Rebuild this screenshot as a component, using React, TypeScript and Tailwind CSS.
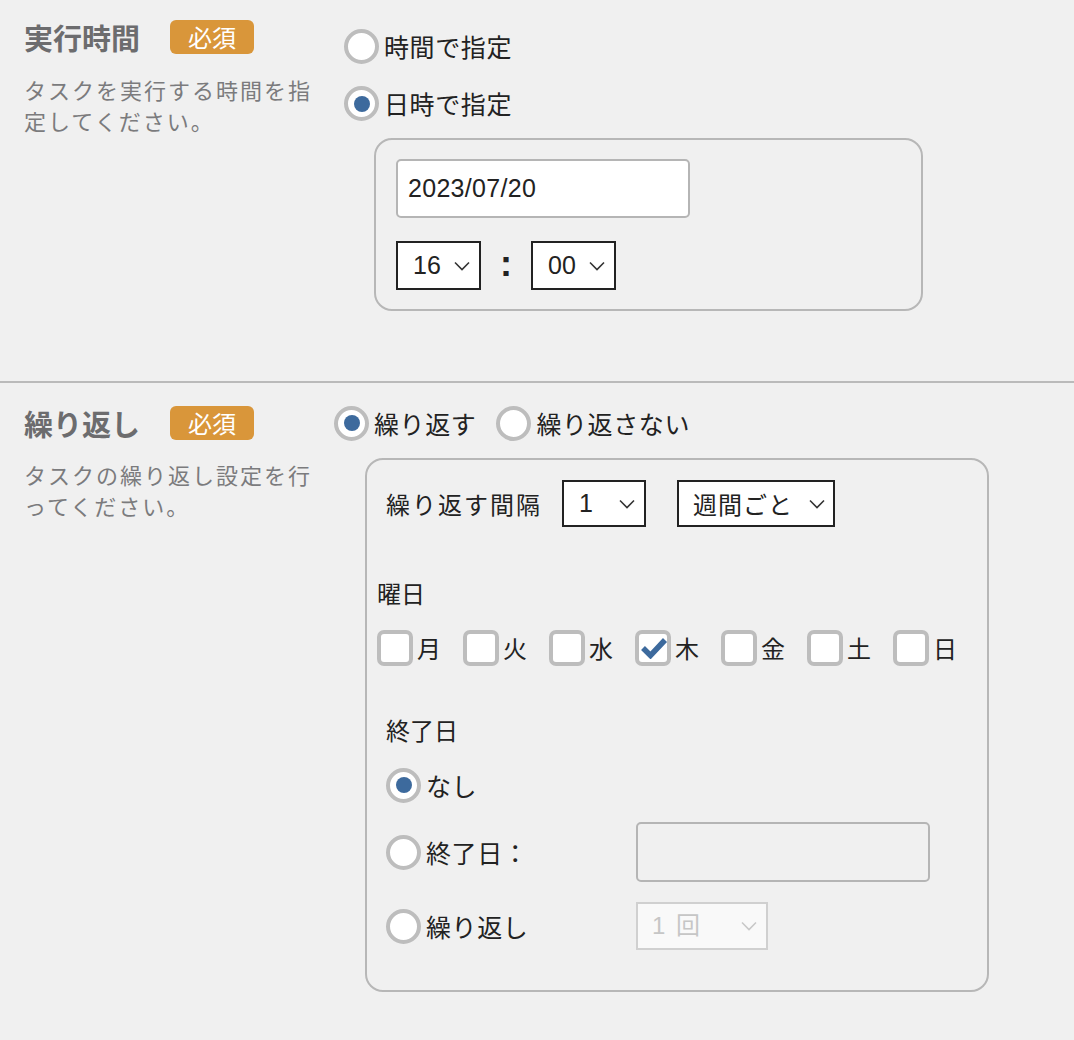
import React from "react";

const jp = '"Noto Sans CJK JP", sans-serif';
const num = '"Liberation Sans", "Noto Sans CJK JP", sans-serif';

function Chevron({ color = "#333" }: { color?: string }) {
    return (
        <svg width="16" height="10" viewBox="0 0 16 10" fill="none">
            <path d="M1 1.5 L8 8.5 L15 1.5" stroke={color} strokeWidth="1.6" />
        </svg>
    );
}

function Radio({ checked, label }: { checked?: boolean; label: string }) {
    return (
        <div className="flex items-center gap-[5px]">
            <span className="flex h-[35px] w-[35px] shrink-0 items-center justify-center rounded-full border-[4px] border-[#bdbdbd] bg-white">
                {checked && <span className="h-[16px] w-[16px] rounded-full bg-[#3d6a9d]" />}
            </span>
            <span className="text-[25px] leading-none tracking-[0.6px] text-[#222]">{label}</span>
        </div>
    );
}

function Select({ value, width, className = "" }: { value: string; width: string; className?: string }) {
    return (
        <div
            className={`flex items-center justify-between border-2 border-[#222] bg-white pl-[15px] pr-[9px] ${width} ${className}`}
            style={{ fontFamily: num }}
        >
            <span className="text-[25px] leading-none text-[#222]">{value}</span>
            <Chevron />
        </div>
    );
}

function Badge() {
    return (
        <span className="flex h-[34px] w-[84px] items-center justify-center rounded-[6px] bg-[#d9963a] text-[24px] leading-none text-white">
            必須
        </span>
    );
}

function Checkbox({ label, checked }: { label: string; checked?: boolean }) {
    return (
        <div className="flex w-[64px] items-center gap-[4px]">
            <span className="relative h-[36px] w-[36px] shrink-0 rounded-[7px] border-[4px] border-[#bdbdbd] bg-white">
                {checked && (
                    <svg className="absolute left-[1px] top-[3px]" width="28" height="22" viewBox="0 0 28 22" fill="none">
                        <path d="M3 11 L10.5 18.5 L25 3" stroke="#3d6a9d" strokeWidth="5.5" />
                    </svg>
                )}
            </span>
            <span className="text-[24px] leading-none text-[#222]">{label}</span>
        </div>
    );
}

export default function App() {
    return (
        <div className="h-[1040px] w-[1074px] overflow-hidden bg-[#f0f0f0]" style={{ fontFamily: jp }}>
            {/* 実行時間 */}
            <div className="flex h-[381px] pl-[24px]">
                <div className="w-[320px] shrink-0 pt-[20px]">
                    <div className="flex items-center gap-[28px]">
                        <span className="w-[118px] text-[29px] font-bold leading-[34px] text-[#6c6c6e]">実行時間</span>
                        <Badge />
                    </div>
                    <p className="mt-[20px] w-[300px] text-[22px] leading-[31px] tracking-[2px] text-[#7b7b7d]">
                        タスクを実行する時間を指定してください。
                    </p>
                </div>
                <div className="pt-[18px]">
                    <div className="flex h-[57px] items-center">
                        <Radio label="時間で指定" />
                    </div>
                    <div className="flex h-[57px] items-center">
                        <Radio label="日時で指定" checked />
                    </div>
                    <div className="ml-[30px] mt-[6px] h-[173px] w-[549px] rounded-[18px] border-2 border-[#b7b7b7] pl-[20px] pt-[19px]">
                        <div
                            className="flex h-[59px] w-[294px] items-center rounded-[5px] border-2 border-[#b5b5b5] bg-white pl-[10px] text-[25px] tracking-[0.3px] text-[#222]"
                            style={{ fontFamily: num }}
                        >
                            2023/07/20
                        </div>
                        <div className="mt-[23px] flex items-center">
                            <Select value="16" width="w-[85px]" className="h-[49px]" />
                            <span className="w-[50px] pb-[4px] text-center text-[36px] font-bold leading-none text-[#222]" style={{ fontFamily: num }}>
                                :
                            </span>
                            <Select value="00" width="w-[85px]" className="h-[49px]" />
                        </div>
                    </div>
                </div>
            </div>

            <div className="h-[2px] w-full bg-[#bababa]" />

            {/* 繰り返し */}
            <div className="flex pl-[24px]">
                <div className="w-[310px] shrink-0 pt-[23px]">
                    <div className="flex items-center gap-[28px]">
                        <span className="w-[118px] text-[29px] font-bold leading-[34px] text-[#6c6c6e]">繰り返し</span>
                        <Badge />
                    </div>
                    <p className="mt-[19px] w-[300px] text-[22px] leading-[31px] tracking-[2px] text-[#7b7b7d]">
                        タスクの繰り返し設定を行ってください。
                    </p>
                </div>
                <div className="pt-[22px]">
                    <div className="flex h-[36px] items-center gap-[20px]">
                        <Radio label="繰り返す" checked />
                        <Radio label="繰り返さない" />
                    </div>
                    <div className="ml-[31px] mt-[17px] h-[534px] w-[624px] rounded-[18px] border-2 border-[#b7b7b7] pt-[20px]">
                        <div className="flex items-center pl-[19px]">
                            <span className="text-[24px] leading-none tracking-[2px] text-[#222]">繰り返す間隔</span>
                            <Select value="1" width="w-[84px]" className="ml-[20px] h-[47px]" />
                            <div className="ml-[31px] flex h-[47px] w-[158px] items-center justify-between border-2 border-[#222] bg-white pl-[14px] pr-[8px]">
                                <span className="text-[24px] leading-none tracking-[1px] text-[#222]">週間ごと</span>
                                <Chevron />
                            </div>
                        </div>

                        <div className="mt-[49px] pl-[10px] text-[24px] leading-[34px] text-[#222]">曜日</div>
                        <div className="mt-[20px] flex gap-[22px] pl-[10px]">
                            <Checkbox label="月" />
                            <Checkbox label="火" />
                            <Checkbox label="水" />
                            <Checkbox label="木" checked />
                            <Checkbox label="金" />
                            <Checkbox label="土" />
                            <Checkbox label="日" />
                        </div>

                        <div className="mt-[47px] pl-[19px] text-[24px] leading-[34px] text-[#222]">終了日</div>
                        <div className="mt-[20px] flex h-[36px] items-center pl-[19px]">
                            <Radio label="なし" checked />
                        </div>
                        <div className="mt-[19px] flex h-[60px] items-center pl-[19px]">
                            <div className="w-[250px]">
                                <Radio label="終了日：" />
                            </div>
                            <div className="h-[60px] w-[294px] rounded-[5px] border-2 border-[#b5b5b5]" />
                        </div>
                        <div className="mt-[20px] flex h-[48px] items-center pl-[19px]">
                            <div className="w-[250px]">
                                <Radio label="繰り返し" />
                            </div>
                            <div className="flex h-[48px] w-[132px] items-center justify-between border-2 border-[#d0d0d0] bg-[#f9f9f9] pl-[14px] pr-[9px]">
                                <span className="text-[24px] leading-none tracking-[2px] text-[#c6c6c6]" style={{ fontFamily: num }}>
                                    1 回
                                </span>
                                <Chevron color="#c8c8c8" />
                            </div>
                        </div>
                    </div>
                </div>
            </div>
        </div>
    );
}
